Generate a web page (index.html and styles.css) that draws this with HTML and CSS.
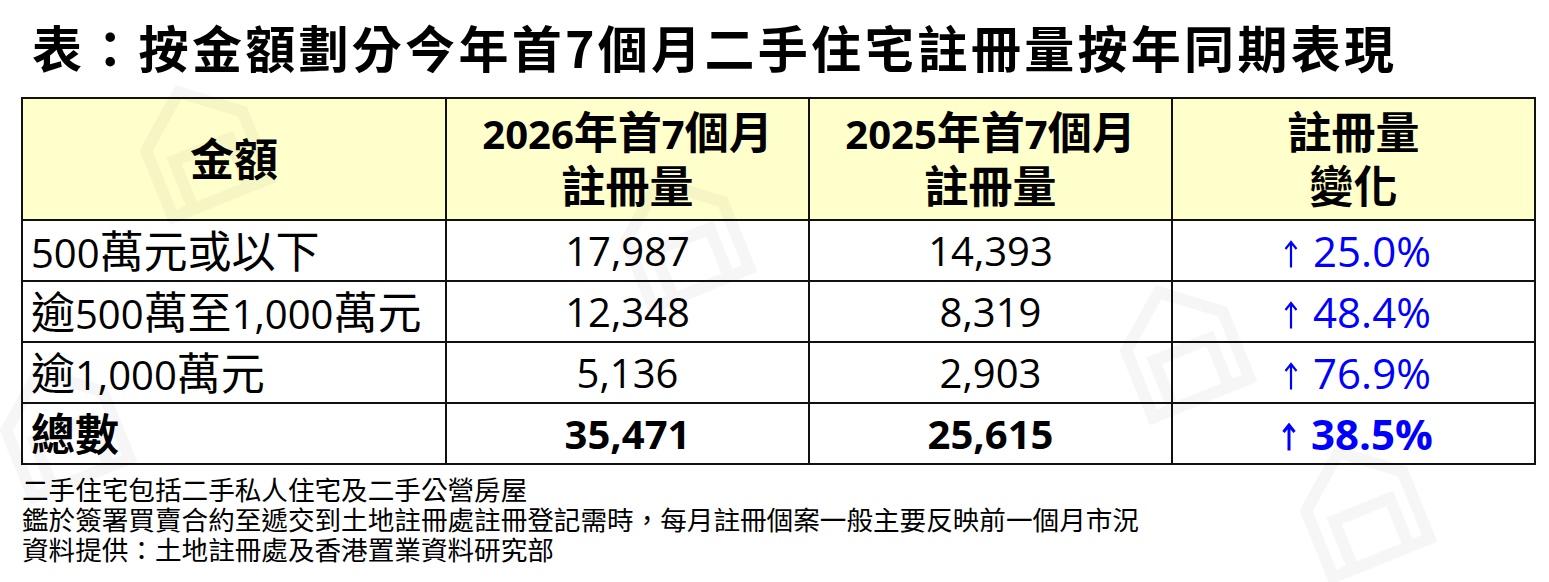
FILE: index.html
```html
<!DOCTYPE html>
<html lang="zh-Hant">
<head>
<meta charset="utf-8">
<title>按金額劃分今年首7個月二手住宅註冊量按年同期表現</title>
<link rel="stylesheet" href="styles.css">
</head>
<body>
<div class="page">
  <h1 class="title">表：按金額劃分今年首7個月二手住宅註冊量按年同期表現</h1>
  <table class="data">
    <colgroup>
      <col class="c1"><col class="c2"><col class="c2"><col class="c2">
    </colgroup>
    <thead>
      <tr>
        <th><span class="cj">金額</span></th>
        <th>2026<span class="cj">年首</span>7<span class="cj">個月</span><br><span class="cj">註冊量</span></th>
        <th>2025<span class="cj">年首</span>7<span class="cj">個月</span><br><span class="cj">註冊量</span></th>
        <th><span class="cj">註冊量</span><br><span class="cj">變化</span></th>
      </tr>
    </thead>
    <tbody>
      <tr>
        <td class="label">500<span class="cj">萬元或以下</span></td>
        <td>17,987</td>
        <td>14,393</td>
        <td class="chg"><svg class="arrow" viewBox="0 0 14 27" aria-hidden="true"><path d="M7 1.5V27M1.5 8.5L7 1.5L12.5 8.5"/></svg>25.0%</td>
      </tr>
      <tr>
        <td class="label"><span class="cj">逾</span>500<span class="cj">萬至</span>1,000<span class="cj">萬元</span></td>
        <td>12,348</td>
        <td>8,319</td>
        <td class="chg"><svg class="arrow" viewBox="0 0 14 27" aria-hidden="true"><path d="M7 1.5V27M1.5 8.5L7 1.5L12.5 8.5"/></svg>48.4%</td>
      </tr>
      <tr>
        <td class="label"><span class="cj">逾</span>1,000<span class="cj">萬元</span></td>
        <td>5,136</td>
        <td>2,903</td>
        <td class="chg"><svg class="arrow" viewBox="0 0 14 27" aria-hidden="true"><path d="M7 1.5V27M1.5 8.5L7 1.5L12.5 8.5"/></svg>76.9%</td>
      </tr>
      <tr class="total">
        <td class="label"><span class="cj">總數</span></td>
        <td>35,471</td>
        <td>25,615</td>
        <td class="chg"><svg class="arrow" viewBox="0 0 14 27" aria-hidden="true"><path d="M7 1.5V27M1.5 8.5L7 1.5L12.5 8.5"/></svg>38.5%</td>
      </tr>
    </tbody>
  </table>
  <div class="notes">
    <p>二手住宅包括二手私人住宅及二手公營房屋</p>
    <p>鑑於簽署買賣合約至遞交到土地註冊處註冊登記需時，每月註冊個案一般主要反映前一個月市況</p>
    <p>資料提供：土地註冊處及香港置業資料研究部</p>
  </div>

  <svg class="wm wm1" viewBox="0 0 120 130" aria-hidden="true"><path d="M8 50L60 8L112 50V122H8Z M30 122V70H90V122"/></svg>
  <svg class="wm wm2" viewBox="0 0 120 130" aria-hidden="true"><path d="M8 50L60 8L112 50V122H8Z M30 122V70H90V122"/></svg>
  <svg class="wm wm3" viewBox="0 0 120 130" aria-hidden="true"><path d="M8 50L60 8L112 50V122H8Z M30 122V70H90V122"/></svg>
  <svg class="wm wm4" viewBox="0 0 120 130" aria-hidden="true"><path d="M8 50L60 8L112 50V122H8Z M30 122V70H90V122"/></svg>
  <svg class="wm wm5" viewBox="0 0 120 130" aria-hidden="true"><path d="M8 50L60 8L112 50V122H8Z M30 122V70H90V122"/></svg>
</div>
</body>
</html>
```

FILE: styles.css
```css
html, body {
  margin: 0;
  padding: 0;
  background: #ffffff;
}

.page {
  position: relative;
  width: 1549px;
  height: 582px;
  overflow: hidden;
  padding: 0 0 0 21px;
  box-sizing: border-box;
  font-family: "Open Sans", "Noto Sans CJK TC", sans-serif;
  color: #000;
}

.title {
  margin: 0;
  padding: 16px 0 0 11px;
  height: 97px;
  box-sizing: border-box;
  font-family: "Noto Sans CJK TC", sans-serif;
  font-weight: 700;
  font-size: 50px;
  line-height: 60px;
  letter-spacing: 3.3px;
  white-space: nowrap;
}

.data {
  border-collapse: collapse;
  table-layout: fixed;
  width: 1514px;
  position: relative;
  z-index: 0;
}

.data .c1 { width: 424px; }
.data .c2 { width: 363px; }

.data th,
.data td {
  border: 2px solid #111;
  padding: 0;
  text-align: center;
  vertical-align: middle;
}

.cj {
  font-family: "Noto Sans CJK TC", sans-serif;
  font-size: 44px;
}

.data th {
  background: #ffffcc;
  font-weight: 700;
  font-size: 40px;
  line-height: 51px;
  height: 120px;
}

.data td {
  font-size: 40px;
  line-height: 50px;
  height: 59px;
  white-space: nowrap;
}

.data td.label {
  text-align: left;
  padding-left: 8px;
}

.data td.chg {
  color: #0000ff;
  font-size: 42px;
  padding-left: 8px;
}

.arrow {
  width: 14px;
  height: 28px;
  margin-right: 15px;
  vertical-align: -1px;
  fill: none;
  stroke: #0000ff;
  stroke-width: 2.2;
}

.total td {
  font-weight: 700;
}

.total .arrow {
  stroke-width: 3;
}

.notes {
  margin-top: 9px;
  font-family: "Noto Sans CJK TC", sans-serif;
  font-size: 26.6px;
  line-height: 30px;
  padding-left: 1px;
}

.notes p {
  margin: 0;
  white-space: nowrap;
}

/* faint watermark logo shapes */
.wm {
  position: absolute;
  width: 120px;
  height: 130px;
  transform: rotate(-22deg);
  fill: none;
  stroke: rgba(0, 0, 0, 0.035);
  stroke-width: 12;
  pointer-events: none;
  z-index: 1;
}

.wm1 { left: 140px; top: 80px; }
.wm2 { left: 620px; top: 170px; }
.wm3 { left: 0px; top: 360px; }
.wm4 { left: 1120px; top: 280px; }
.wm5 { left: 1300px; top: 440px; }
```
